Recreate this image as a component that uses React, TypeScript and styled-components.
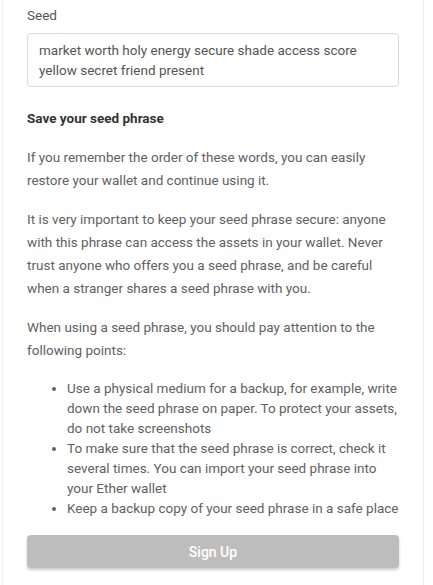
import React from 'react';
import styled, { createGlobalStyle } from 'styled-components';

const GlobalStyle = createGlobalStyle`
  html, body {
    margin: 0;
    padding: 0;
    background-color: #ffffff;
  }
  body {
    font-family: Roboto, "Liberation Sans", Arial, sans-serif;
    -webkit-font-smoothing: antialiased;
  }
`;

const Card = styled.div`
  width: 372px;
  margin-left: 2px;
  padding: 5px 24px 15px;
  background-color: #ffffff;
  border-left: 1px solid #f2f2f2;
  border-right: 1px solid #efefef;
  min-height: 565px;
`;

const Label = styled.label`
  display: block;
  font-size: 13.5px;
  line-height: 20px;
  color: #555555;
  margin-bottom: 8px;
`;

const SeedBox = styled.div`
  border: 1px solid #d6d9dd;
  border-radius: 4px;
  padding: 6px 11px;
  font-size: 13.5px;
  line-height: 20px;
  color: #555555;
`;

const Heading = styled.h3`
  margin: 20px 0 16px;
  font-size: 13.5px;
  line-height: 23px;
  font-weight: 700;
  color: #333333;
`;

const Paragraph = styled.p`
  margin: 0 0 16px;
  font-size: 13.5px;
  line-height: 23px;
  color: #616161;
`;

const Points = styled.ul`
  margin: 16px 0 17px;
  padding-left: 40px;
  font-size: 13.5px;
  line-height: 20px;
  color: #616161;
`;

const SubmitButton = styled.button`
  display: block;
  width: 100%;
  height: 33px;
  border: none;
  border-radius: 4px;
  background-color: #bdbdbd;
  color: #ffffff;
  font-family: Roboto, "Liberation Sans", Arial, sans-serif;
  font-size: 14px;
  font-weight: 500;
  box-shadow: 0 2px 3px rgba(0, 0, 0, 0.2);
  cursor: default;
`;

const App: React.FC = () => {
  return (
    <>
      <GlobalStyle />
      <Card>
        <Label>Seed</Label>
        <SeedBox>
          market worth holy energy secure shade access score yellow secret friend present
        </SeedBox>

        <Heading>Save your seed phrase</Heading>
        <Paragraph>
          If you remember the order of these words, you can easily restore your wallet and continue using it.
        </Paragraph>
        <Paragraph>
          It is very important to keep your seed phrase secure: anyone with this phrase can access the assets in
          your wallet. Never trust anyone who offers you a seed phrase, and be careful when a stranger shares a
          seed phrase with you.
        </Paragraph>
        <Paragraph>
          When using a seed phrase, you should pay attention to the following points:
        </Paragraph>
        <Points>
          <li>
            Use a physical medium for a backup, for example, write down the seed phrase on paper. To protect your
            assets, do not take screenshots
          </li>
          <li>
            To make sure that the seed phrase is correct, check it several times. You can import your seed phrase
            into your Ether wallet
          </li>
          <li>Keep a backup copy of your seed phrase in a safe place</li>
        </Points>

        <SubmitButton disabled>Sign Up</SubmitButton>
      </Card>
    </>
  );
};

export default App;
